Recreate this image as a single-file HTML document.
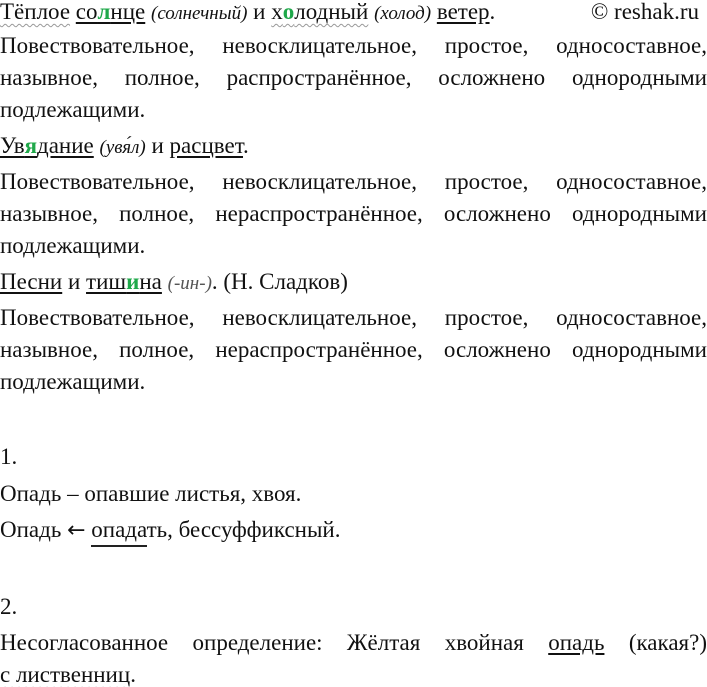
<!DOCTYPE html>
<html><head><meta charset="utf-8"><style>
body{margin:0;background:#fff;width:707px;height:687px;overflow:hidden;position:relative;font-family:"Liberation Serif",serif;font-size:23px;color:#111}
.l{position:absolute;left:0;width:707px;line-height:24px;white-space:nowrap}
.j{text-align:justify;text-align-last:justify;white-space:normal}
u{text-decoration:underline;text-underline-offset:3px}
.w{text-decoration:underline wavy #999 1px;text-underline-offset:4px}
.g{color:#1fa84a;font-weight:bold}
i{font-size:19px}
.ar{font-family:"DejaVu Sans",sans-serif;font-size:22px}
</style></head><body>
<div class="l" style="top:0"><span class="w">Тёплое</span> <u>со<span class="g">л</span>нце</u> <i>(солнечный)</i> и <span class="w">х<span class="g">о</span>лодный</span> <i>(холод)</i> <u>ветер</u>.<span style="position:absolute;right:8px;top:0">© reshak.ru</span></div>
<div class="l j" style="top:34px">Повествовательное, невосклицательное, простое, односоставное,</div>
<div class="l j" style="top:66px">назывное, полное, распространённое, осложнено однородными</div>
<div class="l" style="top:98px">подлежащими.</div>
<div class="l" style="top:134px"><u>Ув<span class="g">я</span>дание</u> <i>(увя́л)</i> и <u>расцвет</u>.</div>
<div class="l j" style="top:170px">Повествовательное, невосклицательное, простое, односоставное,</div>
<div class="l j" style="top:202px">назывное, полное, нераспространённое, осложнено однородными</div>
<div class="l" style="top:234px">подлежащими.</div>
<div class="l" style="top:270px"><u>Песни</u> и <u>тиш<span class="g">и</span>на</u> <i style="color:#555">(-ин-)</i>. (Н. Сладков)</div>
<div class="l j" style="top:306px">Повествовательное, невосклицательное, простое, односоставное,</div>
<div class="l j" style="top:338px">назывное, полное, нераспространённое, осложнено однородными</div>
<div class="l" style="top:370px">подлежащими.</div>
<div class="l" style="top:445px">1.</div>
<div class="l" style="top:482px">Опадь – опавшие листья, хвоя.</div>
<div class="l" style="top:518px">Опадь <span class="ar">←</span> <span style="border-bottom:2px solid #222;padding-bottom:3px">опада</span>ть, бессуффиксный.</div>
<div class="l" style="top:595px">2.</div>
<div class="l j" style="top:631px">Несогласованное определение: Жёлтая хвойная <u>опадь</u> (какая?)</div>
<div class="l" style="top:663px"><span class="w">с лиственниц</span>.</div>
</body></html>
